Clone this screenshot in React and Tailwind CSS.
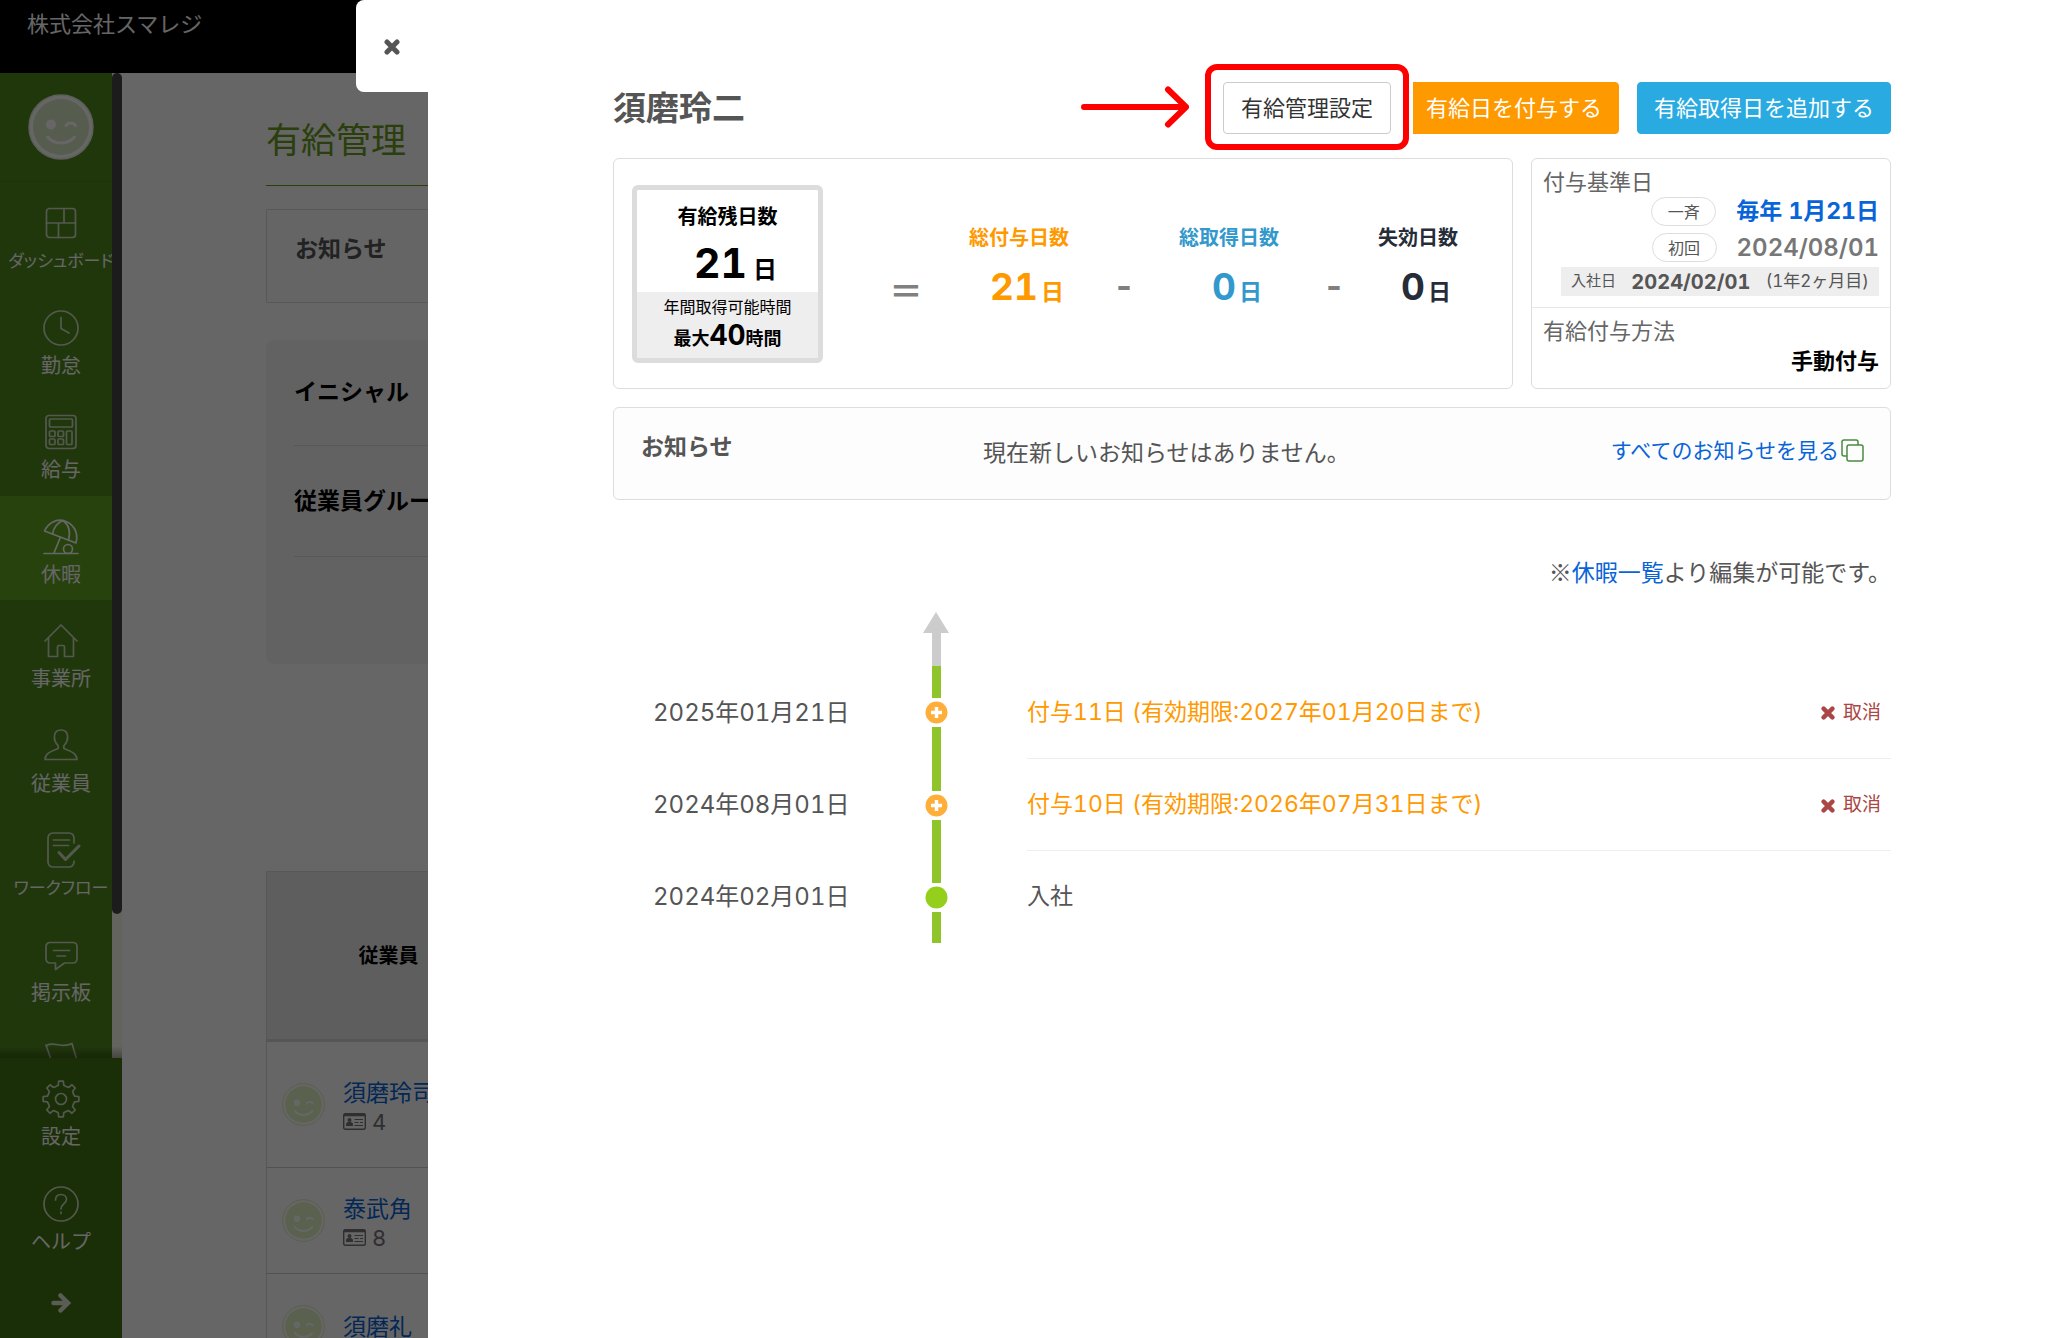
const gearPoints = Array.from({ length: 8 }, (_, i) => {
    const base = (i * Math.PI) / 4;
    return [[-0.34, 13.5], [-0.2, 14], [-0.13, 18], [0.13, 18], [0.2, 14], [0.34, 13.5]]
        .map(([a, r]) => `${18 + r * Math.sin(base + a)},${18 - r * Math.cos(base + a)}`)
        .join(' ');
}).join(' ');

const icons = {
    dashboard: (
        <>
            <rect x="3.5" y="3.5" width="29" height="29" rx="3" />
            <path d="M3.5 18h29M21 3.5V18M15.5 18v14.5" />
        </>
    ),
    clock: (
        <>
            <circle cx="18" cy="18" r="17" />
            <path d="M18 7.5v11l8 4.5" />
        </>
    ),
    calculator: (
        <>
            <rect x="3" y="1.5" width="30" height="33" rx="3" />
            <rect x="6.5" y="5" width="23" height="8" rx="1" />
            <rect x="6.5" y="17" width="5.5" height="5.5" rx="1" />
            <rect x="15" y="17" width="5.5" height="5.5" rx="1" />
            <rect x="6.5" y="25" width="5.5" height="5.5" rx="1" />
            <rect x="15" y="25" width="5.5" height="5.5" rx="1" />
            <rect x="23.5" y="17" width="5.5" height="13.5" rx="1" />
        </>
    ),
    umbrella: (
        <>
            <path d="M1.5 12C5 4 13 0 20 1.5 30 4 36 13 33 24Z" />
            <path d="M20 1.5C14 4 10.5 9 9.5 15M20 1.5c6 4.5 7.5 12 5.5 19.5M17.5 18 11 34M1 34.5h34" />
            <circle cx="25" cy="30" r="4.5" />
        </>
    ),
    house: <path d="M2 18 18 2l16 16M5.5 15v18.5h9V24q0-1.5 1.5-1.5h4q1.5 0 1.5 1.5v9.5h9V15" />,
    person: (
        <path d="M2 31.5h32C34 26 29 23.5 22 21c-1.5-.5-1.5-2-1-3.5 2.500-2.500 4-5.500 3.500-10C24 3.500 21.500 2 18 2s-6 1.500-6.500 5.500c-.5 4.500 1 7.500 3.500 10 .5 1.500.5 3-1 3.500C7 23.500 2 26 2 31.500Z" />
    ),
    workflow: (
        <>
            <path d="M31 11V6a5 5 0 0 0-5-5H10a5 5 0 0 0-5 5v24a5 5 0 0 0 5 5h16a5 5 0 0 0 5-5v-1M10.5 8h16M10.5 13.5h15" />
            <path d="m16 20.5 6.5 7L36 14" strokeWidth="3" />
        </>
    ),
    bubble: (
        <path d="M7 5.5h23a4 4 0 0 1 4 4V22a4 4 0 0 1-4 4h-8.500l-9 6.500V26H7a4 4 0 0 1-4-4V9.500a4 4 0 0 1 4-4ZM10.500 13.500h16M14 19h8.500" />
    ),
    flag: <path d="m3 4 11 32M3.500 4.500C12 0 19 8 29 2.500l5 17c-8 5-16-3-25.500 1" />,
    gear: (
        <>
            <polygon points={gearPoints} />
            <circle cx="18" cy="18" r="5.5" />
        </>
    ),
    help: (
        <>
            <circle cx="18" cy="18" r="17" />
            <path d="M12.5 14c0-3.5 2.300-5.500 5.500-5.500s5.500 2 5.500 5c0 4-5.500 4.500-5.500 9.500M18 26v1.500" />
        </>
    ),
};

const menu = [
    { label: 'ダッシュボード', icon: 'dashboard', long: true },
    { label: '勤怠', icon: 'clock' },
    { label: '給与', icon: 'calculator' },
    { label: '休暇', icon: 'umbrella', active: true },
    { label: '事業所', icon: 'house' },
    { label: '従業員', icon: 'person' },
    { label: 'ワークフロー', icon: 'workflow', long: true },
    { label: '掲示板', icon: 'bubble' },
    { label: '', icon: 'flag' },
];

const footerMenu = [
    { label: '設定', icon: 'gear' },
    { label: 'ヘルプ', icon: 'help' },
];

const employees = [
    { name: '須磨玲司', code: '4', height: 'h-[127px]' },
    { name: '泰武角', code: '8', height: 'h-[106px]' },
    { name: '須磨礼', height: 'h-[106px]' },
];

const history = [
    { date: '2025年01月21日', text: '付与11日 (有効期限:2027年01月20日まで)', grant: true },
    { date: '2024年08月01日', text: '付与10日 (有効期限:2026年07月31日まで)', grant: true },
    { date: '2024年02月01日', text: '入社' },
];

function Smiley({ className, rim, disc }) {
    return (
        <svg viewBox="0 0 66 66" className={className} fill="none" aria-hidden="true">
            <circle cx="33" cy="33" r="32" fill="#ffffff" stroke={rim} strokeWidth="1.5" />
            <circle cx="33" cy="33" r="28" fill={disc} />
            <circle cx="23" cy="30.5" r="5" fill="#ffffff" />
            <path d="M38 31.5c2.500-3.500 7-3.500 9.500 0M19.500 43c7 8 20 8 27 0" stroke="#ffffff" strokeWidth="3" strokeLinecap="round" />
        </svg>
    );
}

function CrossIcon({ className }) {
    return (
        <svg viewBox="0 0 16 16" className={className} fill="none" stroke="currentColor" strokeWidth="5" strokeLinecap="round" aria-hidden="true">
            <path d="m3 3 10 10M13 3 3 13" />
        </svg>
    );
}

function IdCardIcon({ className }) {
    return (
        <svg viewBox="0 0 23 17" className={className} fill="none" stroke="currentColor" aria-hidden="true">
            <rect x="0.7" y="0.7" width="21.6" height="15.6" rx="1.5" strokeWidth="1.4" />
            <path d="M1 2h21" strokeWidth="2.5" />
            <circle cx="6.5" cy="7" r="2" fill="currentColor" stroke="none" />
            <path d="M3 13v-1.500q0-2.500 2-2.500h3q2 0 2 2.500V13Z" fill="currentColor" stroke="none" />
            <path d="M11.5 6.5H20M11.5 9.5h4M17 9.5h3M11.5 12.5H20" strokeWidth="1.2" />
        </svg>
    );
}

function MenuItem({ label, icon, active, long }) {
    return (
        <a
            href="#"
            aria-label={label || icon}
            className={`flex h-[105px] shrink-0 flex-col items-center pt-[23px] even:h-[104px] ${active ? 'bg-[#62a521]' : ''}`}
        >
            <svg
                viewBox="0 0 36 36"
                className="size-9 shrink-0 overflow-visible"
                fill="none"
                stroke={active ? '#ffffff' : '#d2dec6'}
                strokeWidth="1.7"
                strokeLinecap="round"
                strokeLinejoin="round"
                aria-hidden="true"
            >
                {icons[icon]}
            </svg>
            <span className={`mt-2 leading-6 whitespace-nowrap text-white ${long ? "text-[17px] [font-feature-settings:'palt']" : 'text-[20px]'}`}>
                {label}
            </span>
        </a>
    );
}

function Sidebar() {
    return (
        <aside className="flex w-[122px] shrink-0 flex-col">
            <div className="relative min-h-0 flex-1 overflow-hidden bg-[#528a1e]">
                <div className="flex h-[109px] justify-center border-b border-[#4a7d1a] pt-[21px]">
                    <Smiley className="size-[66px]" rim="#e6eedd" disc="#d6e6c4" />
                </div>
                <nav className="flex flex-col">
                    {menu.map((item) => (
                        <MenuItem key={item.icon} {...item} />
                    ))}
                </nav>
                <div className="absolute inset-y-0 right-0 w-[10px] bg-[#f5fae8]">
                    <div className="h-[841px] rounded-full bg-[#464646]" />
                </div>
                <div className="absolute inset-x-0 bottom-0 h-3 bg-gradient-to-t from-black/30 to-transparent" />
            </div>
            <div className="flex flex-col bg-[#417312]">
                {footerMenu.map((item) => (
                    <MenuItem key={item.icon} {...item} />
                ))}
                <button type="button" aria-label="メニューを開く" className="flex h-[71px] items-center justify-center text-[#dfe8d5]">
                    <svg viewBox="0 0 20 20" className="size-5" fill="none" stroke="currentColor" strokeWidth="4.5" strokeLinecap="round" aria-hidden="true">
                        <path d="M2.5 10H16M9.500 2.500 17 10l-7.500 7.500" />
                    </svg>
                </button>
            </div>
        </aside>
    );
}

function LeavePage() {
    return (
        <main className="min-w-0 flex-1 overflow-hidden bg-white pl-[144px]">
            <h1 className="mt-[45px] text-[35px] leading-[44px] text-[#6b9e1e]">有給管理</h1>
            <div className="mt-[23px] h-px bg-[#6b9e1e]" />
            <section className="mt-[23px] h-[94px] border border-[#dddddd] bg-[#fcfcfc] pt-6 pl-7">
                <h2 className="text-[23px] leading-[30px] font-bold text-[#555555]">お知らせ</h2>
            </section>
            <section className="mt-[37px] h-[324px] rounded-lg bg-[#f6f6f6] pl-7 text-[23px] font-bold text-black">
                <div className="flex h-[106px] items-center border-b border-[#dddddd]">イニシャル</div>
                <div className="flex h-[111px] items-center border-b border-[#dddddd]">従業員グループ</div>
            </section>
            <table className="mt-[207px] w-[245px] border-collapse border border-[#dddddd]">
                <thead>
                    <tr className="h-[169px] border-b-3 border-[#d8d8d8] bg-[#ebebeb] text-[20px] text-black">
                        <th>従業員</th>
                    </tr>
                </thead>
                <tbody>
                    {employees.map((employee) => (
                        <tr key={employee.name} className={`border-b border-[#cccccc] ${employee.height}`}>
                            <td className="py-0 pl-[15px]">
                                <div className="flex items-center gap-[18px]">
                                    <Smiley className="size-[43px] shrink-0" rim="#dcedbc" disc="#e0f2c3" />
                                    <div>
                                        <a href="#" className="block text-[23px] leading-[34px] text-[#0864d8]">{employee.name}</a>
                                        {employee.code && (
                                            <div className="flex items-center gap-[6px] text-[22px] leading-6 text-[#777777]">
                                                <IdCardIcon className="h-[17px] w-[23px]" />
                                                {employee.code}
                                            </div>
                                        )}
                                    </div>
                                </div>
                            </td>
                        </tr>
                    ))}
                </tbody>
            </table>
        </main>
    );
}

function Stat({ title, days, color }) {
    return (
        <div className={`pb-1 text-center font-bold whitespace-nowrap ${color}`}>
            <div className="text-[20px] leading-6">{title}</div>
            <div className="mt-3 flex items-baseline justify-center gap-[3px] pl-4 text-[37px] leading-[50px]">
                {days}
                <span className="text-[23px]">日</span>
            </div>
        </div>
    );
}

function Balance() {
    return (
        <section className="flex flex-1 items-center rounded-md border border-[#dddddd] pl-[18px]">
            <div className="w-[191px] shrink-0 rounded-md border-5 border-[#dcdcdc] text-center font-bold text-black">
                <div className="h-[102px] pt-[15px]">
                    <div className="text-[20px] leading-6">有給残日数</div>
                    <div className="mt-[9px] flex items-baseline justify-center gap-[6px] pl-4 text-[41px] leading-[50px]">
                        21<span className="text-[24px]">日</span>
                    </div>
                </div>
                <div className="h-[66px] bg-[#eeeeee] pt-[3px]">
                    <div className="text-[16px] leading-6 font-normal">年間取得可能時間</div>
                    <div className="flex items-baseline justify-center text-[18px] leading-8">
                        最大<span className="text-[28px]">40</span>時間
                    </div>
                </div>
            </div>
            <div className="mr-[50px] ml-[35px] grid flex-1 grid-cols-[96fr_130fr_80fr_130fr_80fr_88fr] items-center text-center text-[34px] leading-10">
                <div className="pt-9 font-bold text-[#808080]">＝</div>
                <Stat title="総付与日数" days="21" color="text-[#ff9900]" />
                <div className="pt-6 font-bold text-[#808080]">-</div>
                <Stat title="総取得日数" days="0" color="text-[#3399cc]" />
                <div className="pt-6 font-bold text-[#808080]">-</div>
                <Stat title="失効日数" days="0" color="text-[#262c38]" />
            </div>
        </section>
    );
}

function Pill({ children }) {
    return (
        <span className="flex h-[29px] w-[65px] items-center justify-center rounded-full border border-[#dddddd] text-[16px] text-[#555555]">
            {children}
        </span>
    );
}

function GrantRule() {
    return (
        <section className="w-[360px] shrink-0 rounded-md border border-[#dddddd] text-[#666666]">
            <div className="h-[149px] border-b border-[#e8e8e8] px-[11px] pt-2">
                <h2 className="text-[22px] leading-[30px]">付与基準日</h2>
                <div className="flex items-center justify-end gap-5">
                    <Pill>一斉</Pill>
                    <a href="#" className="text-[23px] leading-[29px] font-bold text-[#0864d8]">毎年 1月21日</a>
                </div>
                <div className="mt-[7px] flex items-center justify-end gap-5">
                    <Pill>初回</Pill>
                    <span className="text-[24px] leading-[29px] font-semibold text-[#777777]">2024/08/01</span>
                </div>
                <div className="mt-[5px] ml-auto flex h-[29px] w-[318px] items-center justify-between bg-[#eeeeee] px-[10px] text-[#555555]">
                    <span className="text-[15px]">入社日</span>
                    <span className="text-[20px] font-bold">2024/02/01</span>
                    <span className="text-[17px]">(1年2ヶ月目)</span>
                </div>
            </div>
            <div className="px-[11px] pt-2">
                <h2 className="text-[22px] leading-[30px]">有給付与方法</h2>
                <div className="text-right text-[22px] leading-[30px] font-bold text-black">手動付与</div>
            </div>
        </section>
    );
}

function History() {
    return (
        <div className="mt-[26px]">
            <svg viewBox="0 0 26 54" className="ml-[310px] h-[54px] w-[26px]" fill="#cccccc" aria-hidden="true">
                <path d="M13 0 26 21H18V54H9V21H0Z" />
            </svg>
            <ol>
                {history.map((item) => (
                    <li key={item.date} className="group flex h-[92px] items-stretch text-[23px] text-[#555555] first:h-[93px]">
                        <div className="flex w-[308px] items-center pl-10 text-[24px]">{item.date}</div>
                        <div className="flex w-[31px] flex-col items-center gap-[3px]">
                            <div className="w-[9px] flex-1 bg-[#8fc42b]" />
                            <svg viewBox="0 0 23 23" className="size-[23px]" aria-hidden="true">
                                <circle cx="11.5" cy="11.5" r="11" fill={item.grant ? '#ffae3a' : '#93cf1b'} />
                                {item.grant && <path d="M11.5 6v11M6 11.5h11" stroke="#ffffff" strokeWidth="3.5" />}
                            </svg>
                            <div className="w-[9px] flex-1 bg-[#8fc42b]" />
                        </div>
                        <div className="ml-[75px] flex flex-1 items-center justify-between border-b border-[#eeeeee] pr-[10px] group-last:border-transparent">
                            <span className={item.grant ? 'text-[#ff9900]' : ''}>{item.text}</span>
                            {item.grant && (
                                <button type="button" className="flex items-center gap-2 pt-[2px] text-[19px] text-[#aa4643]">
                                    <CrossIcon className="size-[14px]" />
                                    取消
                                </button>
                            )}
                        </div>
                    </li>
                ))}
            </ol>
        </div>
    );
}

export default function App() {
    return (
        <div className="relative h-screen overflow-hidden font-['Inter','Noto_Sans_CJK_JP',sans-serif] tabular-nums" lang="ja">
            <div className="flex h-full flex-col">
                <header className="h-[73px] shrink-0 bg-black pt-[9px] pl-[27px] text-[22px] leading-[30px] text-white">株式会社スマレジ</header>
                <div className="flex min-h-0 flex-1">
                    <Sidebar />
                    <LeavePage />
                </div>
            </div>
            <div className="absolute inset-0 bg-black/60" />

            <div role="dialog" aria-label="須磨玲二" className="absolute inset-y-0 right-0 left-[428px] bg-white pt-[82px] pr-[157px] pl-[185px]">
                <button
                    type="button"
                    aria-label="閉じる"
                    className="absolute top-0 right-full flex h-[92px] w-[72px] items-center justify-center rounded-l-lg bg-white pt-[2px] text-[#555555]"
                >
                    <CrossIcon className="size-4" />
                </button>

                <div className="flex items-center justify-between">
                    <h1 className="text-[33px] leading-[50px] font-bold text-[#555555]">須磨玲二</h1>
                    <div className="flex gap-[18px] text-[22px] leading-[50px] text-white">
                        <div className="relative">
                            <button type="button" className="rounded-sm border border-[#cccccc] bg-white px-[17px] text-[#333333]">有給管理設定</button>
                            <div className="pointer-events-none absolute -inset-x-[18px] -top-[18px] -bottom-4 z-10 rounded-xl border-6 border-[#ff0000] shadow-[0_0_0_4px_white]" />
                            <svg viewBox="0 0 108 42" className="absolute top-1 right-full mr-[34px] h-[42px] w-[108px]" fill="none" stroke="#ff0000" strokeWidth="6" strokeLinecap="round" strokeLinejoin="round" aria-hidden="true">
                                <path d="M3 21h102M87 3.5 105 21 87 38.5" />
                            </svg>
                        </div>
                        <button type="button" className="rounded-sm border border-[#ff9900] bg-[#ff9900] px-4">有給日を付与する</button>
                        <button type="button" className="rounded-sm border border-[#29abe2] bg-[#29abe2] px-4">有給取得日を追加する</button>
                    </div>
                </div>

                <div className="mt-6 flex h-[231px] gap-[18px]">
                    <Balance />
                    <GrantRule />
                </div>

                <section className="mt-[18px] flex h-[93px] items-center rounded-md border border-[#dddddd] bg-[#fdfdfd] pr-[26px] pl-[27px] text-[23px] text-[#555555]">
                    <h2 className="w-[342px] pb-3 font-bold">お知らせ</h2>
                    <p className="flex-1">現在新しいお知らせはありません。</p>
                    <a href="#" className="flex items-center gap-[2px] pb-[6px] text-[21px] text-[#0864d8]">
                        すべてのお知らせを見る
                        <svg viewBox="0 0 23 23" className="size-[23px]" fill="none" stroke="#4a8a3f" strokeWidth="1.5" aria-hidden="true">
                            <rect x="6" y="6" width="16" height="16" rx="2" />
                            <path d="M6 17H3a2 2 0 0 1-2-2V3a2 2 0 0 1 2-2h12a2 2 0 0 1 2 2v3" />
                        </svg>
                    </a>
                </section>

                <p className="mt-14 text-right font-['Noto_Sans_CJK_JP',sans-serif] text-[23px] leading-[30px] text-[#555555]">
                    ※<a href="#" className="text-[#0864d8]">休暇一覧</a>より編集が可能です。
                </p>

                <History />
            </div>
        </div>
    );
}
